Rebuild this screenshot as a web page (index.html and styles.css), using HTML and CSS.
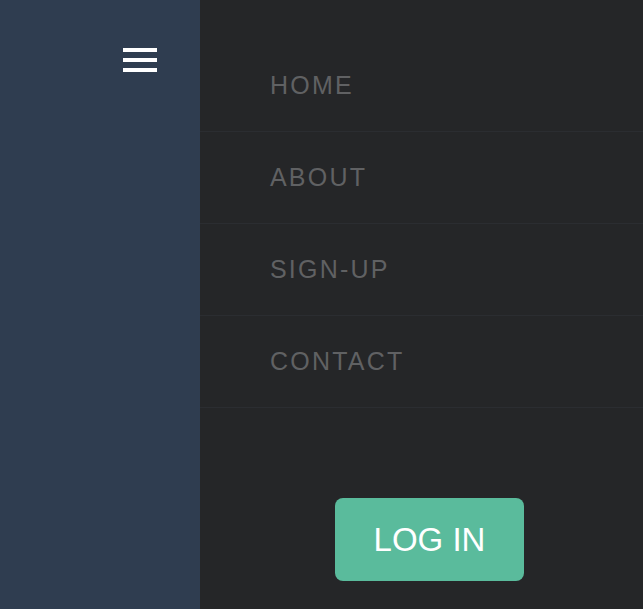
FILE: index.html
```html
<!DOCTYPE html>
<html>
<head>
<meta charset="utf-8">
<link rel="stylesheet" href="styles.css">
</head>
<body>
<div class="layout">
  <aside class="sidebar">
    <button class="burger" aria-label="Menu">
      <span class="bar"></span>
      <span class="bar"></span>
      <span class="bar"></span>
    </button>
  </aside>
  <main class="panel">
    <nav class="menu">
      <a class="item" href="#">HOME</a>
      <a class="item" href="#">ABOUT</a>
      <a class="item" href="#">SIGN-UP</a>
      <a class="item" href="#">CONTACT</a>
    </nav>
    <div class="actions">
      <button class="login">LOG IN</button>
    </div>
  </main>
</div>
</body>
</html>
```
FILE: styles.css
```css
html, body {
  margin: 0;
  padding: 0;
  height: 100%;
}
body {
  font-family: "Liberation Sans", Arial, sans-serif;
  background: #252628;
  overflow: hidden;
}
.layout {
  display: flex;
  height: 609px;
}
.sidebar {
  width: 200px;
  flex: none;
  background: #2f3d50;
  display: flex;
  justify-content: flex-end;
  align-items: flex-start;
  padding: 48px 43px 0 0;
  box-sizing: border-box;
}
.burger {
  display: flex;
  flex-direction: column;
  gap: 6px;
  padding: 0;
  margin: 0;
  border: 0;
  background: none;
  cursor: pointer;
}
.bar {
  display: block;
  width: 34px;
  height: 4px;
  background: #ffffff;
}
.panel {
  flex: 1;
  background: #252628;
  padding-top: 40px;
  display: flex;
  flex-direction: column;
}
.menu {
  display: flex;
  flex-direction: column;
}
.item {
  height: 91px;
  display: flex;
  align-items: center;
  padding-left: 70px;
  border-bottom: 1px solid #2b2d31;
  color: #606163;
  font-size: 25px;
  letter-spacing: 2.2px;
  text-decoration: none;
}
.actions {
  display: flex;
  padding-left: 135px;
  padding-top: 90px;
}
.login {
  width: 189px;
  height: 83px;
  border: 0;
  border-radius: 8px;
  background: #5abb9c;
  color: #ffffff;
  font-family: "Liberation Sans", Arial, sans-serif;
  font-size: 33px;
  padding: 0;
  cursor: pointer;
}
```
